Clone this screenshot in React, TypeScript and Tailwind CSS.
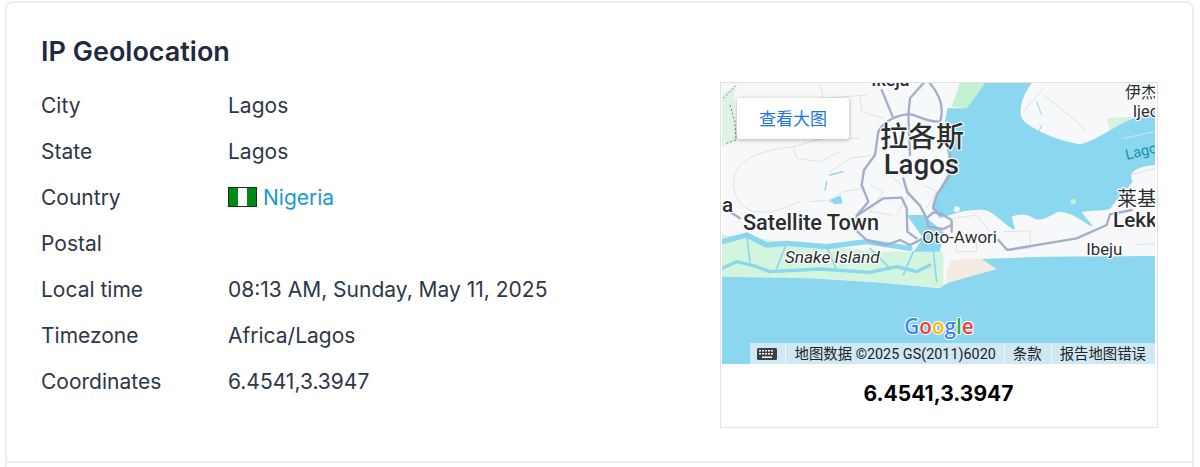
import React from "react";

const rows = [
  { label: "City", value: "Lagos" },
  { label: "State", value: "Lagos" },
  { label: "Country", value: "Nigeria", flag: true },
  { label: "Postal", value: "" },
  { label: "Local time", value: "08:13 AM, Sunday, May 11, 2025" },
  { label: "Timezone", value: "Africa/Lagos" },
  { label: "Coordinates", value: "6.4541,3.3947" },
];

// thin grey street lines
const streets = [
  "M70 330 C70 260 130 230 250 215 L340 190 L450 190",
  "M250 215 L260 250 L330 260 L390 230",
  "M70 330 C80 390 110 420 190 410 L270 380",
  "M360 290 L420 250 L490 240",
  "M300 380 L360 375 L400 350 L460 340",
  "M450 60 L455 110 L520 130",
  "M330 30 L340 70 L470 60",
  "M480 330 L520 350 L480 410 L550 420",
  "M540 300 L600 350 L560 420",
  "M640 330 L680 350 L650 400",
  "M730 430 L800 420 L840 470",
  "M880 470 L960 468 L960 520 L880 525",
  "M740 470 L740 530 L800 530 L800 470",
  "M1000 60 L1090 130 L1130 170",
  "M1240 190 L1335 170",
  "M1260 300 L1335 280",
  "M1280 510 L1335 505",
  "M940 110 L1000 40",
];

const mainRoads = [
  "M515 45 L548 125",
  "M505 170 C520 140 560 118 600 118 C625 120 640 140 690 140 C700 110 698 70 660 25",
  "M640 25 L600 70 L595 120 L600 240",
  "M505 170 L495 240 L462 285 L455 330 L475 380 L440 422 L442 470 L470 495 L530 510 L570 495 L600 510 L640 490",
  "M440 422 L520 370 L575 368 L590 400 L592 470 L620 490",
  "M580 310 L592 352 L630 392 L650 430 L670 412 L690 415 L725 435 L725 470",
  "M650 430 L655 455 L700 462 L725 450",
  "M720 300 L680 360 L670 400 L690 420",
  "M700 150 L720 230 L720 300",
  "M865 495 L892 525 L1100 490 L1190 450 L1200 418 L1265 405",
  "M36 395 L90 430",
];

function MapArt() {
  return (
    <svg viewBox="36 24 1299 843" className="block w-full h-full font-['Roboto','Noto_Sans_CJK_SC',sans-serif]">
      <rect x="36" y="24" width="1299" height="843" fill="#f7f8fa" />
      {/* parks */}
      <path d="M36 60 L75 30 L70 120 L85 195 L36 215Z" fill="#dff3e2" />
      <path d="M750 24 L835 24 L800 65 L770 100 L725 95Z" fill="#c5f0d2" />
      <path d="M1190 130 L1265 125 L1240 165 L1200 170Z" fill="#d5f3dc" />
      <path d="M1290 30 L1335 30 L1335 60 L1300 60Z" fill="#d5f3dc" />
      {/* lagoon */}
      <path
        d="M825 24 L965 24 C940 60 925 95 935 130 C950 155 1030 195 1110 208 C1170 195 1220 140 1335 105 L1335 270 C1290 275 1250 285 1268 320 C1250 345 1225 365 1200 402 C1170 410 1130 405 1115 412 L1150 455 C1120 445 1090 410 1045 410 C1020 420 1000 440 975 432 C950 415 930 415 905 425 L915 465 C880 450 860 415 825 405 C780 400 730 415 690 430 L665 400 C665 370 700 330 715 290 C725 250 700 200 700 170 L712 100 L770 100 L800 60Z"
        fill="#8ad7ef"
      />
      <path d="M980 80 L995 120 M985 175 L995 150" stroke="#8ad7ef" strokeWidth="3" fill="none" />
      <circle cx="740" cy="403" r="9" fill="#f7f8fa" />
      <circle cx="1090" cy="380" r="8" fill="#c5f0d2" />
      {/* wetlands */}
      <path d="M36 480 L140 490 L300 510 L520 530 L700 530 L700 640 L500 620 L300 610 L36 605Z" fill="#d3f4dd" />
      <path d="M590 420 L640 420 L700 470 L690 530 L610 530 L640 490Z" fill="#8ad7ef" />
      <g fill="none" stroke="#8ad7ef" strokeLinecap="round" strokeLinejoin="round">
        <path d="M36 500 L110 480 L170 510 L230 505 L350 515 L470 500 L600 520" strokeWidth="16" />
        <path d="M36 580 L80 560 L130 572 L180 590 L330 582 L480 592 L560 575 L620 590 L660 570" strokeWidth="10" />
        <path d="M110 480 L120 560 M230 505 L200 580 M480 520 L540 580 M610 530 L580 600 M670 530 L680 620 M350 515 L380 585" strokeWidth="5" />
        <path d="M400 290 L360 300 M380 370 L360 380 M350 320 L345 345" strokeWidth="4" />
      </g>
      <path d="M360 373 L392 362 L398 385 L372 388Z" fill="#8ad7ef" />
      {/* beach + ocean */}
      <path d="M725 555 L810 550 L860 580 L712 630 L708 590Z" fill="#f3ebe1" />
      <path
        d="M36 605 L300 610 L500 622 L690 640 L710 625 L860 582 L815 552 L1000 545 L1335 543 L1335 867 L36 867Z"
        fill="#8ad7ef"
      />
      <g fill="none" stroke="#dfe2e7" strokeWidth="3">
        {streets.map((d) => (
          <path key={d} d={d} />
        ))}
      </g>
      <path d="M40 70 L80 30 M60 90 L75 140 L78 195 L50 205" fill="none" stroke="#5f8a6d" strokeWidth="3" strokeDasharray="6 6" />
      <g fill="none" stroke="#a3aecb" strokeWidth="7" strokeLinejoin="round" strokeLinecap="round">
        {mainRoads.map((d) => (
          <path key={d} d={d} />
        ))}
      </g>
      {/* labels */}
      <g fill="#2b2d31" stroke="#ffffff" strokeWidth="7" strokeLinejoin="round" style={{ paintOrder: "stroke" }}>
        <text x="484" y="34" fontSize="54" fontWeight="500">Ikeja</text>
        <text x="510" y="215" fontSize="84" fontWeight="500">拉各斯</text>
        <text x="521" y="297" fontSize="83" fontWeight="500">Lagos</text>
        <text x="99" y="464" fontSize="65" fontWeight="500">Satellite Town</text>
        <text x="36" y="410" fontSize="62" fontWeight="500">a</text>
        <text x="637" y="505" fontSize="51">Oto-Awori</text>
        <text x="1129" y="540" fontSize="50">Ibeju</text>
        <text x="224" y="563" fontSize="52" fontStyle="italic">Snake Island</text>
        <text x="1245" y="70" fontSize="48">伊杰</text>
        <text x="1268" y="125" fontSize="49">Ijeo</text>
        <text x="1221" y="392" fontSize="60">莱基</text>
        <text x="1209" y="455" fontSize="62" fontWeight="500">Lekk</text>
      </g>
      <text x="1250" y="255" fontSize="44" fill="#1f8fa8" transform="rotate(-14 1250 255)">Lago</text>
      <text
        x="583"
        y="778"
        fontSize="62"
        fontWeight="600"
        stroke="#ffffff"
        strokeWidth="6"
        strokeLinejoin="round"
        className="font-['Open_Sans',sans-serif]"
        style={{ paintOrder: "stroke" }}
      >
        <tspan fill="#4285f4">G</tspan>
        <tspan fill="#ea4335">o</tspan>
        <tspan fill="#fbbc05">o</tspan>
        <tspan fill="#4285f4">g</tspan>
        <tspan fill="#34a853">l</tspan>
        <tspan fill="#ea4335">e</tspan>
      </text>
    </svg>
  );
}

function Keyboard() {
  return (
    <svg viewBox="0 0 20 12" className="w-5 h-3">
      <rect width="20" height="12" rx="1.5" fill="#3c4043" />
      <g fill="#ffffff">
        <rect x="2" y="2" width="2" height="1.5" />
        <rect x="5" y="2" width="2" height="1.5" />
        <rect x="8" y="2" width="2" height="1.5" />
        <rect x="11" y="2" width="2" height="1.5" />
        <rect x="14" y="2" width="2" height="1.5" />
        <rect x="2" y="5" width="2" height="1.5" />
        <rect x="5" y="5" width="2" height="1.5" />
        <rect x="8" y="5" width="2" height="1.5" />
        <rect x="11" y="5" width="2" height="1.5" />
        <rect x="14" y="5" width="2" height="1.5" />
        <rect x="5" y="8.5" width="10" height="1.5" />
      </g>
    </svg>
  );
}

export default function App() {
  return (
    <div className="h-[467px] overflow-hidden bg-white pl-[5px] pr-[6px] pt-[1px] font-['Inter','Noto_Sans',sans-serif]">
      <div className="border-2 border-[#eeeeee] rounded-t-lg h-[480px]">
        <section className="flex justify-between h-[460px] border-b-2 border-[#eeeeee] pl-[34px] pr-[34px] pt-[31px]">
          <div>
            <h2 className="text-[27px] leading-[36px] font-semibold text-[#1f2a40] mb-[13px]">IP Geolocation</h2>
            <div>
              {rows.map((r) => (
                <div key={r.label} className="flex h-[46px] items-center text-[21px] text-[#2d3748]">
                  <div className="w-[187px]">{r.label}</div>
                  {r.flag ? (
                    <div className="flex items-center gap-[6px]">
                      <span className="flex w-[29px] h-[20px] border border-[#1d2b20] -mt-[3px]">
                        <span className="flex-1 bg-[#008a16]" />
                        <span className="flex-1 bg-white" />
                        <span className="flex-1 bg-[#008a16]" />
                      </span>
                      <a className="text-[#1b98d5]">{r.value}</a>
                    </div>
                  ) : (
                    <div>{r.value}</div>
                  )}
                </div>
              ))}
            </div>
          </div>

          <div className="w-[438px] h-[346px] mt-[48px] border border-[#e2e2e2] pl-px pr-[2px]">
            <div className="relative h-[281px] overflow-hidden">
              <MapArt />
              <div className="absolute left-[15px] top-[15px] w-[112px] h-[41px] bg-white rounded-[2px] shadow-[0_1px_4px_rgba(0,0,0,0.3)] flex items-center justify-center pb-[2px] text-[17px] text-[#1a73e8] font-['Noto_Sans_CJK_SC',sans-serif]">
                查看大图
              </div>
              <div className="absolute right-0 bottom-0 h-[21px] flex text-[14.4px] leading-[22px] pt-px text-[#222222] bg-[#cfe9f4] font-['Roboto','Noto_Sans_CJK_SC',sans-serif] divide-x divide-[#eef7fb]">
                <div className="w-[36px] flex items-center justify-center">
                  <Keyboard />
                </div>
                <div className="pl-[9px] pr-[8px]">地图数据 ©2025 GS(2011)6020</div>
                <div className="pl-[8px] pr-[9px]">条款</div>
                <div className="pl-[8px] pr-[9px]">报告地图错误</div>
              </div>
            </div>
            <div className="text-center text-[21px] leading-[30px] font-bold text-black mt-[15px]">6.4541,3.3947</div>
          </div>
        </section>
      </div>
    </div>
  );
}
